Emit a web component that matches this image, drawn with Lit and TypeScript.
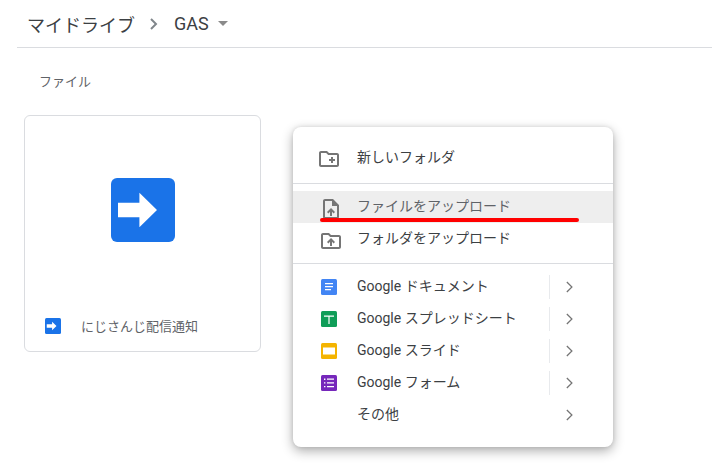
import { LitElement, html, css, svg } from "lit";
import { customElement } from "lit/decorators.js";

const chevron = html`<svg class="chev" width="24" height="24" viewBox="0 0 24 24"><path fill="#757575" d="M9.4 7.4 10.3 6.5 15.8 12l-5.5 5.5-.9-.9 4.6-4.6z"/></svg>`;

const arrow = svg`<path fill="#fff" d="M1.75 6.2h5.35V3.7L11.5 8l-4.4 4.3V9.8H1.75z"/>`;

@customElement("app-root")
export class AppRoot extends LitElement {
  static styles = css`
    :host {
      display: block;
      position: relative;
      width: 712px;
      height: 473px;
      overflow: hidden;
      background: #fff;
      font-family: Roboto, "Noto Sans CJK JP", sans-serif;
      color: #3c4043;
    }
    .header {
      display: flex;
      align-items: center;
      height: 47px;
      margin-left: 17px;
      padding-left: 10px;
      border-bottom: 1px solid #dadce0;
      font-size: 18px;
      box-sizing: content-box;
    }
    .crumb-sep { margin: 0 8px 0 7px; display: block; }
    .crumb-sep path { fill: #80868b; }
    .caret { margin-left: 9px; width: 0; height: 0; border-left: 5px solid transparent; border-right: 5px solid transparent; border-top: 5px solid #8a8a8a; }
    .label {
      padding: 25px 0 0 39px;
      height: 42px;
      font-size: 13px;
      line-height: 17px;
      color: #5f6368;
      box-sizing: content-box;
    }
    .card {
      margin-left: 24px;
      width: 235px;
      height: 235px;
      border: 1px solid #dadce0;
      border-radius: 6px;
      display: flex;
      flex-direction: column;
      align-items: center;
    }
    .thumb { margin-top: 62px; display: block; }
    .name {
      align-self: stretch;
      margin-top: 76px;
      padding-left: 20px;
      display: flex;
      align-items: center;
      height: 16px;
      font-size: 13px;
      color: #5f6368;
    }
    .name svg { margin-right: 20px; flex: none; }
    .name span { padding-bottom: 2px; }
    .menu {
      position: absolute;
      left: 293px;
      top: 127px;
      width: 320px;
      height: 320px;
      box-sizing: border-box;
      padding-top: 15px;
      background: #fff;
      border-radius: 8px;
      box-shadow: 0 4px 12px rgba(0,0,0,.32), 0 0 4px rgba(0,0,0,.1);
    }
    .row {
      display: flex;
      align-items: center;
      height: 32px;
      font-size: 14px;
      color: #3c4043;
    }
    .row.hl { background: #eeeeee; color: #5f6368; }
    .slot { width: 64px; flex: none; display: flex; justify-content: flex-start; }
    .slot svg { display: block; }
    .i-new { margin: 2px 0 0 24px; }
    .i-file { margin: 4px 0 0 26px; }
    .i-fold { margin: 4px 0 0 26px; }
    .i-app { margin: 0 0 0 28px; }
    .text { flex: 1; min-width: 0; padding-bottom: 4px; }
    .sep { width: 1px; height: 24px; background: #e8eaed; flex: none; }
    .chev { flex: none; margin: 0 32px 0 7px; }
    .none .chev { margin-left: 8px; }
    hr { border: 0; height: 1px; background: #dadce0; margin: 9px 0 7px; }
    hr.b { margin: 8px 0 7px; }
    .ink {
      position: absolute;
      left: 320px;
      top: 218px;
      width: 259px;
      height: 3.5px;
      background: #ff0000;
      border-radius: 2px;
    }
  `;

  private appRow(name: string, icon: unknown) {
    return html`<div class="row">
      <div class="slot"><div class="i-app">${icon}</div></div>
      <div class="text">${name}</div>
      <div class="sep"></div>
      ${chevron}
    </div>`;
  }

  render() {
    const docs = html`<svg width="16" height="16" viewBox="0 0 16 16"><rect width="16" height="16" rx="1.5" fill="#4285f4"/><path fill="#fff" d="M4 4h8v1.2H4zM4 7h8v1.2H4zM4 10h6v1.2H4z"/></svg>`;
    const sheets = html`<svg width="16" height="16" viewBox="0 0 16 16"><rect width="16" height="16" rx="1.5" fill="#0f9d58"/><path fill="#fff" d="M3 4.5h10v1.2H8.6V13H7.4V5.7H3z"/></svg>`;
    const slides = html`<svg width="16" height="16" viewBox="0 0 16 16"><rect width="16" height="16" rx="1.5" fill="#f4b400"/><rect x="2" y="4.5" width="12" height="7" fill="#fff"/></svg>`;
    const forms = html`<svg width="16" height="16" viewBox="0 0 16 16"><rect width="16" height="16" rx="1.5" fill="#7627bb"/><path fill="#fff" d="M3 3.5h1.4v1.4H3zM6 3.5h7v1.3H6zM3 7.2h1.4v1.4H3zM6 7.2h7v1.3H6zM3 10.9h1.4v1.4H3zM6 10.9h7v1.3H6z"/></svg>`;
    return html`
      <div class="header">
        <span>マイドライブ</span>
        <svg class="crumb-sep" width="24" height="24" viewBox="0 0 24 24"><path d="M9.7 6.3 8.3 7.7 12.6 12l-4.3 4.3 1.4 1.4L15.4 12z"/></svg>
        <span>GAS</span>
        <div class="caret"></div>
      </div>
      <div class="label">ファイル</div>
      <div class="card">
        <svg class="thumb" width="64" height="64" viewBox="0 0 16 16"><rect width="16" height="16" rx="1.5" fill="#1a73e8"/>${arrow}</svg>
        <div class="name">
          <svg width="16" height="16" viewBox="0 0 16 16"><rect width="16" height="16" rx="1.5" fill="#1a73e8"/>${arrow}</svg>
          <span>にじさんじ配信通知</span>
        </div>
      </div>
      <div class="menu">
        <div class="row">
          <div class="slot"><svg class="i-new" width="24" height="24" viewBox="0 0 24 24"><path fill="#757575" d="M20 6h-8l-2-2H4c-1.1 0-1.99.9-1.99 2L2 18c0 1.1.9 2 2 2h16c1.1 0 2-.9 2-2V8c0-1.1-.9-2-2-2zm0 12H4V6h5.17l2 2H20v10zm-8-4h2v2h2v-2h2v-2h-2v-2h-2v2h-2v2z"/></svg></div>
          <div class="text">新しいフォルダ</div>
        </div>
        <hr />
        <div class="row hl">
          <div class="slot"><svg class="i-file" width="24" height="24" viewBox="0 0 24 24"><path fill="#757575" d="M14 2H6c-1.1 0-1.99.9-1.99 2L4 20c0 1.1.89 2 1.99 2H18c1.1 0 2-.9 2-2V8l-6-6zm4 18H6V4h7v5h5v11zM8 15.01l1.41 1.41L11 14.84V19h2v-4.16l1.59 1.59L16 15.01 12.01 11z"/><path fill="#757575" d="M13 3h1l5 5v1h-6z"/></svg></div>
          <div class="text">ファイルをアップロード</div>
        </div>
        <div class="row">
          <div class="slot"><svg class="i-fold" width="24" height="24" viewBox="0 0 24 24"><path fill="#757575" d="M20 6h-8l-2-2H4c-1.1 0-1.99.9-1.99 2L2 18c0 1.1.9 2 2 2h16c1.1 0 2-.9 2-2V8c0-1.1-.9-2-2-2zm0 12H4V6h5.17l2 2H20v10zM9.41 14.42 11 12.84V17h2v-4.16l1.59 1.59L16 13.01 12.01 9 8 13.01l1.41 1.41z"/></svg></div>
          <div class="text">フォルダをアップロード</div>
        </div>
        <hr class="b" />
        ${this.appRow("Google ドキュメント", docs)}
        ${this.appRow("Google スプレッドシート", sheets)}
        ${this.appRow("Google スライド", slides)}
        ${this.appRow("Google フォーム", forms)}
        <div class="row none">
          <div class="slot"></div>
          <div class="text">その他</div>
          ${chevron}
        </div>
      </div>
      <div class="ink"></div>
    `;
  }
}
